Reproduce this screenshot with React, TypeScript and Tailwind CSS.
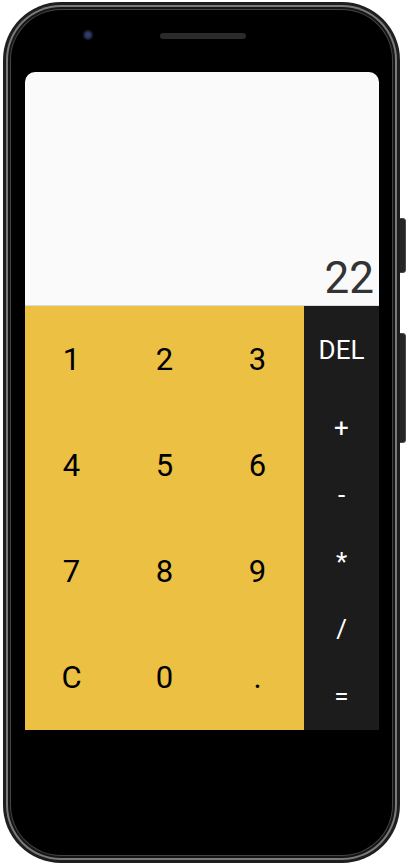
import React from "react";

const digits = ["1", "2", "3", "4", "5", "6", "7", "8", "9", "C", "0", "."];
const ops = ["+", "-", "*", "/", "="];

export default function App() {
  return (
    <div className="relative h-[865px] w-[407px] bg-white" style={{ fontFamily: "Roboto, 'Liberation Sans', sans-serif" }}>
      {/* side buttons */}
      <div className="absolute left-[398px] top-[218px] h-[55px] w-[8px] rounded-r-[3px] border border-[#4a4a4a] bg-[#262626]" />
      <div className="absolute left-[398px] top-[333px] h-[110px] w-[8px] rounded-r-[3px] border border-[#4a4a4a] bg-[#262626]" />

      {/* phone body */}
      <div className="absolute left-[3px] top-[2px] h-[861px] w-[397px] rounded-[58px] bg-[#1e1e1e] p-[3px]">
        <div className="h-full w-full rounded-[55px] bg-[#7a7a7a] p-[2px]">
          <div className="h-full w-full rounded-[53px] bg-[#161616] p-[2px]">
            <div className="h-full w-full rounded-[51px] bg-[#444] p-px">
              <div className="flex h-full w-full flex-col rounded-[50px] bg-black">
                {/* top bezel */}
                <div className="flex h-[62px] items-start pt-[20px]">
                  <div className="ml-[72px] h-[10px] w-[10px] rounded-full bg-[#1c1f2e] p-[2px]">
                    <div className="h-full w-full rounded-full bg-[#2d3a70]" />
                  </div>
                  <div className="ml-[67px] mt-[3px] h-[6px] w-[86px] rounded-full bg-[#2a2a2a]" />
                </div>
                {/* screen */}
                <div className="ml-[14px] flex h-[658px] w-[354px] flex-col overflow-hidden rounded-t-[10px]">
                  <div className="flex h-[233px] items-end justify-end bg-[#fafafa] pb-[5px] pr-[5px]">
                    <span className="text-[44px] leading-none text-[#333]">22</span>
                  </div>
                  <div className="h-px bg-[#dcdcdc]" />
                  <div className="flex h-[424px]">
                    <div className="grid w-[279px] grid-cols-3 grid-rows-4 bg-[#ebc043]">
                      {digits.map((d) => (
                        <div key={d} className="flex items-center justify-center text-[31px] leading-none text-black">
                          {d}
                        </div>
                      ))}
                    </div>
                    <div className="flex w-[75px] flex-col bg-[#1c1c1c]">
                      <div className="flex h-[88px] items-center justify-center text-[26px] leading-none text-white">DEL</div>
                      {ops.map((o) => (
                        <div key={o} className="flex flex-1 items-center justify-center text-[26px] leading-none text-white">
                          {o}
                        </div>
                      ))}
                    </div>
                  </div>
                </div>
              </div>
            </div>
          </div>
        </div>
      </div>
    </div>
  );
}
